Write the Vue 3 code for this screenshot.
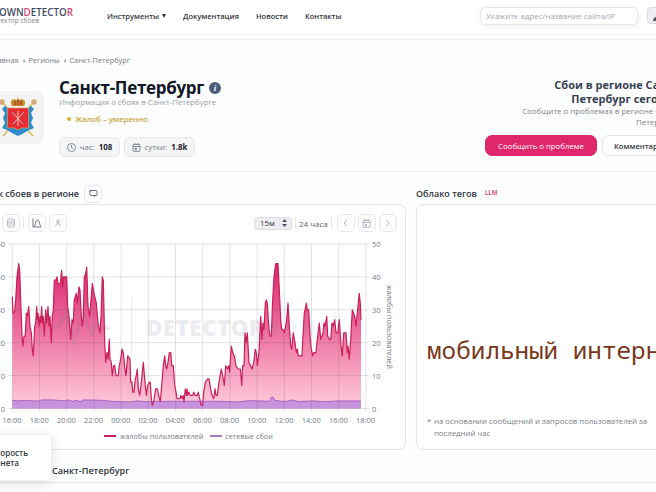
<script setup>
const menu = ['Документация', 'Новости', 'Контакты']
const hours = ['16:00', '18:00', '20:00', '22:00', '00:00', '02:00', '04:00', '06:00', '08:00', '10:00', '12:00', '14:00', '16:00', '18:00']
const levels = [50, 40, 30, 20, 10, 0]

// [position on the time axis, number of complaints]
const complaints = [
  [1, 34], [3, 29], [8, 29.5], [11, 33], [15, 40], [20, 44], [23, 42], [27, 30], [30, 22], [33, 19], [36, 22], [40, 22],
  [43, 29], [46, 28], [50, 31], [54, 25], [58, 23], [61, 18], [64, 16], [68, 25], [71, 26], [74, 31], [76, 27], [78, 29],
  [81, 25], [84, 28], [86, 26], [89, 31], [91, 26], [94, 28], [97, 22], [101, 30], [104, 26], [108, 31], [111, 25], [114, 28],
  [118, 20], [121, 28], [124, 30], [127, 39], [132, 39], [135, 40], [138, 38], [145, 38], [149, 42], [152, 37], [155, 40],
  [164, 40], [167, 31], [171, 28], [176, 21], [180, 27], [184, 26], [187, 33], [193, 35], [196, 32], [201, 37], [204, 36],
  [208, 28], [211, 25], [214, 28], [217, 40], [221, 41], [224, 43], [228, 31], [233, 28], [237, 33], [241, 38], [246, 35],
  [253, 32], [258, 26], [264, 23], [267, 28], [271, 40], [274, 39], [278, 20], [281, 14], [285, 17], [288, 15], [292, 21],
  [294, 15], [298, 14], [301, 10], [305, 13], [308, 13], [312, 10], [319, 10], [322, 13], [326, 15], [330, 18], [334, 17],
  [339, 12], [342, 10], [347, 16], [354, 15], [356, 8], [360, 8], [362, 5], [366, 5], [370, 9], [373, 10], [376, 12],
  [379, 6], [383, 4], [387, 7], [391, 11], [394, 14], [399, 8], [403, 4], [407, 7], [412, 8], [415, 8], [418, 3], [421, 1],
  [425, 2], [431, 6], [436, 6], [440, 4], [445, 2], [450, 8], [454, 13], [458, 16], [461, 13], [464, 12], [468, 14],
  [472, 17], [476, 17], [479, 13], [484, 13], [488, 7], [492, 5], [495, 3], [504, 3], [506, 4], [511, 3], [514, 4],
  [516, 2], [520, 6], [523, 4], [525, 6], [527, 4], [530, 5], [535, 4], [542, 4], [545, 5], [549, 4], [556, 4], [559, 5],
  [563, 3], [567, 1], [572, 1], [575, 5], [580, 8], [587, 9], [591, 9], [596, 6], [600, 4], [605, 3], [609, 6], [612, 4],
  [616, 4], [621, 8], [628, 12], [632, 10], [637, 7], [641, 13], [647, 12], [650, 13], [653, 11], [658, 19], [662, 17],
  [667, 16], [672, 13], [678, 12], [685, 12], [689, 7], [692, 13], [696, 13], [699, 23], [702, 20], [706, 23], [711, 14],
  [720, 12], [725, 14], [730, 18], [733, 17], [736, 13], [741, 17], [746, 28], [750, 21], [753, 26], [756, 24], [760, 32],
  [763, 33], [766, 32], [771, 24], [774, 22], [778, 22], [782, 33], [786, 40], [791, 44], [798, 44], [801, 38], [806, 27],
  [809, 24], [813, 24], [817, 23], [821, 25], [824, 27], [828, 32], [832, 25], [836, 19], [839, 18], [844, 23], [849, 20],
  [853, 17], [856, 18], [859, 16], [870, 16], [873, 22], [877, 29], [881, 31], [883, 32], [886, 30], [890, 30], [894, 22],
  [898, 18], [902, 16], [905, 17], [912, 17], [916, 21], [922, 26], [926, 21], [933, 23], [936, 26], [939, 25], [944, 28],
  [947, 22], [952, 21], [956, 21], [960, 26], [963, 25], [968, 27], [972, 23], [977, 23], [982, 27], [987, 19], [991, 16],
  [995, 23], [1002, 23], [1006, 17], [1008, 19], [1012, 15], [1016, 21], [1021, 30], [1028, 28], [1032, 25], [1036, 29],
  [1042, 35], [1045, 32], [1047, 27]
]
const network = [
  [1, 2.5], [20, 2.3], [40, 2.5], [60, 2.3], [80, 2.3], [90, 2.6], [120, 2.6], [160, 2.3], [169, 2.6], [182, 2.2],
  [190, 2.5], [205, 2.1], [215, 2.6], [270, 2.5], [300, 2.2], [350, 2], [375, 2.3], [400, 2.1], [480, 2.2], [620, 2.2],
  [680, 2], [710, 2.4], [773, 2.2], [777, 3.3], [784, 3.4], [788, 2.5], [810, 2.2], [825, 2.2], [840, 2.6], [860, 2.1],
  [900, 2.3], [940, 2.1], [980, 2.3], [1047, 2.3]
]

const toLine = (points) => 'M' + points.map(([x, v]) => `${(x / 3).toFixed(1)} ${(164.5 - v * 3.29).toFixed(1)}`).join('L')
const toArea = (points) => `${toLine(points)}V164.5H0.3Z`
</script>

<template>
  <div class="page">
    <header class="header">
      <div class="logo">
        <div class="logo-name"><i>D</i>OWN<i>D</i>ETECTO<i>R</i></div>
        <div class="logo-sub">Детектор сбоев</div>
      </div>
      <nav class="menu">
        <a class="tools">Инструменты<span class="caret"></span></a>
        <a v-for="item in menu" :key="item">{{ item }}</a>
      </nav>
      <div class="search">Укажите адрес/название сайта/IP</div>
      <div class="user">
        <svg width="14" height="12" viewBox="0 0 14 12" fill="#4b5563"><circle cx="7" cy="3" r="2.8" /><path d="M1 11c0-3 2.5-4.5 6-4.5s6 1.500 6 4.500z" /></svg>
      </div>
    </header>
    <div class="header-gap"></div>

    <div class="crumbs">
      <span>Главная</span><b>›</b><span>Регионы</span><b>›</b><span>Санкт-Петербург</span>
    </div>

    <section class="hero">
      <div class="emblem">
        <svg width="40" height="44" viewBox="0 0 40 44">
          <path d="M4 6l31 34M36 6L5 40" stroke="#d9bd61" stroke-width="1.5" />
          <circle cx="4" cy="6" r="2.7" fill="#d9a877" /><circle cx="36" cy="6" r="2.7" fill="#d9a877" />
          <path d="M7 10l-3 3 3 4-2 5 2 5-3 5 5 2 5 3 6 3 6-3 5-3 5-2-3-5 2-5-2-5 3-4-3-3-4 3H11z" fill="#2d8dcb" />
          <path d="M9.500 12h21v20h-7l-3.500 2-3.500-2h-7z" fill="#e62b32" stroke="#cda94f" stroke-width=".7" />
          <path d="M14 16l11 12M26 16L15 28M20 15v15" stroke="#f3c9bd" stroke-width="1" />
          <path d="M14 10c-3-5 1-8 5-6l1-3 1 3c4-2 8 1 5 6z" fill="#c58a2c" /><path d="M17 9V5M20 9V4M23 9V5" stroke="#a33c25" stroke-width="1.3" />
        </svg>
      </div>
      <div class="hero-info">
        <div class="title-row"><h1>Санкт-Петербург</h1><span class="info">i</span></div>
        <p class="subtitle">Информация о сбоях в Санкт-Петербурге</p>
        <p class="status"><span class="dot"></span>Жалоб – умеренно</p>
        <div class="chips">
          <div class="chip hour">
            <svg width="9" height="9" viewBox="0 0 9 9" fill="none" stroke="#6b7280" stroke-width=".8"><circle cx="4.5" cy="4.5" r="4" /><path d="M4.500 2v2.700l1.700 1" /></svg>
            <span>час:</span><b>108</b>
          </div>
          <div class="chip day">
            <svg width="9" height="9" viewBox="0 0 9 9" fill="none" stroke="#6b7280" stroke-width=".8"><rect x="1" y="1.4" width="7" height="7" rx="1" /><path d="M1 3.500h7M2.800 0v2M6.200 0v2M3 5.300h1.500v1.500H3z" /></svg>
            <span>сутки:</span><b>1.8k</b>
          </div>
        </div>
      </div>
      <div class="report">
        <h2>Сбои в регионе Санкт-<br><span class="shift">Петербург сегодня</span></h2>
        <p>Сообщите о проблемах в регионе Санкт-<br><span class="shift">Петербург</span></p>
        <div class="actions">
          <button class="btn primary">Сообщить о проблеме</button>
          <button class="btn plain">Комментарии</button>
        </div>
      </div>
    </section>

    <section class="content">
      <div class="chart-col">
        <div class="col-head">
          <h3 class="chart-title">График сбоев в регионе</h3>
          <span class="icon-btn">
            <svg width="9" height="9" viewBox="0 0 9 9" fill="none" stroke="#4b5563" stroke-width=".8"><rect x="1" y="1.5" width="7" height="5" rx=".6" /><path d="M5 8l1.500-1.500M1 3V1.500h2" /></svg>
          </span>
        </div>
        <div class="card chart-card">
          <div class="toolbar">
            <span class="icon-btn">
              <svg width="10" height="10" viewBox="0 0 10 10" fill="none" stroke="#9ca3af" stroke-width=".7"><ellipse cx="5" cy="2" rx="3.5" ry="1.3" /><path d="M1.500 2v6c0 1.600 7 1.600 7 0V2M1.500 4c0 1.500 7 1.500 7 0M1.500 6c0 1.500 7 1.500 7 0" /></svg>
            </span>
            <i class="sep tool-sep"></i>
            <span class="icon-btn">
              <svg width="10" height="10" viewBox="0 0 10 10" fill="none" stroke="#4b5563" stroke-width=".8"><path d="M1 .5V9h8.500M2 8.500c1.500 0 1-6.500 3.500-6.500s2 6.500 3.500 6.500" /></svg>
            </span>
            <span class="icon-btn last-tool">
              <svg width="8" height="8" viewBox="0 0 8 8" fill="none" stroke="#9ca3af" stroke-width=".8"><circle cx="4" cy="2.5" r="1.4" /><path d="M1.300 7.200L3.300 4.600h1.400l2 2.600" /></svg>
            </span>
            <div class="select">15м<svg width="5" height="8" viewBox="0 0 5 8" fill="#4b5563"><path d="M2.500 0L5 3H0zM2.500 8L0 5h5z" /></svg></div>
            <i class="sep"></i>
            <span class="range">24 часа</span>
            <i class="sep"></i>
            <span class="icon-btn nav"><svg width="5" height="8" viewBox="0 0 5 8" fill="none" stroke="#b3b7be"><path d="M4 .8L1 4l3 3.200" /></svg></span>
            <span class="icon-btn nav"><svg width="9" height="9" viewBox="0 0 9 9" fill="none" stroke="#9ca3af" stroke-width=".8"><rect x="1" y="1.4" width="7" height="7" rx="1" /><path d="M1 3.500h7M2.800 0v2M6.200 0v2M3 5.300h1.500v1.500H3z" /></svg></span>
            <span class="icon-btn nav"><svg width="5" height="8" viewBox="0 0 5 8" fill="none" stroke="#b3b7be"><path d="M1 .8L4 4 1 7.200" /></svg></span>
          </div>
          <svg class="chart" width="405" height="190" viewBox="0 -9 405 190">
            <defs>
              <linearGradient id="pink" x1="0" y1="19" x2="0" y2="164" gradientUnits="userSpaceOnUse">
                <stop offset="0" stop-color="#db246d" /><stop offset=".45" stop-color="#ec6d9d" /><stop offset="1" stop-color="#ffccdc" />
              </linearGradient>
            </defs>
            <g transform="translate(12 0)">
              <path :d="toArea(complaints)" fill="url(#pink)" />
              <path :d="toArea(network)" fill="#c893dd" />
              <g class="grid">
                <path v-for="v in levels" :key="v" :d="`M-4 ${164.5 - v * 3.29}H357`" />
                <path v-for="(h, i) in hours" :key="i" :d="`M${i * 27.2 + 0.3} 0V168`" />
              </g>
              <g class="watermark">
                <path d="M38 83h8l8-13 8 26 9-26 8 20 7-9 4 3h8" fill="none" stroke="#69758e" stroke-width="4" />
                <path d="M119.500 53V110" stroke="#69758e" />
                <text x="134" y="92" textLength="118">DETECTOR</text>
                <text x="255" y="92" textLength="48" class="wm-tail">404</text>
              </g>
              <path :d="toLine(complaints)" class="line pink" />
              <path :d="toLine(network)" class="line violet" />
            </g>
            <text v-for="v in levels" :key="'l' + v" class="axis" x="5" :y="167.5 - v * 3.29" text-anchor="end">{{ v }}</text>
            <text v-for="v in levels" :key="'r' + v" class="axis" x="372" :y="167.5 - v * 3.29">{{ v }}</text>
            <text v-for="(h, i) in hours" :key="'h' + i" class="axis" :x="12 + i * 27.2" y="179" text-anchor="middle" textLength="19">{{ h }}</text>
            <text class="axis" transform="translate(386.5 41) rotate(90)" textLength="84">жалобы пользователей</text>
          </svg>
          <div class="legend">
            <span class="key"></span><span>жалобы пользователей</span>
            <span class="key violet-key"></span><span>сетевые сбои</span>
          </div>
        </div>
      </div>

      <div class="tags-col">
        <div class="col-head"><h3>Облако тегов</h3><sup>LLM</sup></div>
        <div class="card tags-card">
          <div class="tag">мобильный интернет</div>
          <div class="note"><span>*</span><p>на основании сообщений и запросов пользователей за<br>последний час</p></div>
        </div>
      </div>
    </section>

    <footer class="next"><h3>Санкт-Петербург</h3></footer>

    <div class="toast"><span>Скорость</span><br><span class="toast-second">интернета</span></div>
  </div>
</template>

<style>
body {
  margin: 0;
  background: #fff;
}
</style>

<style scoped>
.page {
  position: relative;
  width: 656px;
  height: 492px;
  overflow: hidden;
  background: #fdfefe;
  color: #30343c;
  font-family: "Open Sans", "Noto Sans", sans-serif;
  font-size: 8px;
  white-space: nowrap;
}

h1, h2, h3, p {
  margin: 0;
}

.header {
  display: flex;
  align-items: flex-start;
  box-sizing: border-box;
  height: 35px;
  background: #fff;
  border-bottom: 1px solid #f1f2f3;
}

.header-gap {
  height: 4px;
  background: #fff;
  border-bottom: 1px solid #f1f2f3;
}

.logo {
  display: flex;
  flex-direction: column;
  align-items: flex-end;
  flex-shrink: 0;
  width: 73px;
  padding-top: 6px;
}

.logo-name {
  font-size: 9.8px;
  font-weight: 600;
  line-height: 13px;
  color: #3e4a60;
}

.logo-name i {
  font-style: normal;
  color: #d53f78;
}

.logo-sub {
  margin: -3px 34px 0 0;
  font-size: 6.6px;
  line-height: 9px;
  color: #858990;
}

.menu {
  display: flex;
  flex-shrink: 0;
  gap: 17px;
  box-sizing: border-box;
  width: 407px;
  padding-left: 34px;
  font-size: 7.5px;
  font-weight: 600;
  line-height: 32px;
}

.tools {
  display: flex;
  align-items: center;
}

.caret {
  margin-left: 3px;
  border: 2px solid transparent;
  border-top: 4px solid #30343c;
  border-bottom: 0;
}

.search {
  box-sizing: border-box;
  flex-shrink: 0;
  width: 158px;
  height: 18px;
  margin-top: 7px;
  padding-left: 5px;
  border: 1px solid #e4e6ea;
  border-radius: 5px;
  background: #fff;
  box-shadow: 0 2px 7px #eef0f2;
  font-size: 7.9px;
  line-height: 16px;
  color: #a1a6ae;
}

.user {
  box-sizing: border-box;
  flex-shrink: 0;
  width: 24px;
  height: 17px;
  margin: 7px 0 0 9px;
  padding: 2px 4px;
  border: 1px solid #d9dbe0;
  border-radius: 4px;
  background: #eeeff2;
}

.crumbs {
  display: flex;
  justify-content: flex-end;
  width: 130px;
  padding-top: 14px;
  font-size: 7.4px;
  line-height: 12px;
  color: #777b82;
}

.crumbs b {
  margin: 0 3px 0 4px;
}

.hero {
  display: flex;
  height: 105px;
  border-bottom: 1px solid #eef0f0;
}

.emblem {
  display: flex;
  align-items: center;
  justify-content: center;
  flex-shrink: 0;
  width: 52px;
  height: 53px;
  margin: 25px 0 0 -8px;
  border-radius: 6px;
  background: #f3f3f4;
}

.hero-info {
  flex-shrink: 0;
  width: 220px;
  padding: 12px 0 0 15px;
}

.title-row {
  display: flex;
  align-items: center;
  height: 19px;
}

h1 {
  font-size: 17px;
  line-height: 19px;
  letter-spacing: -.32px;
  color: #111827;
}

.info {
  width: 12px;
  height: 12px;
  margin-left: 5px;
  border-radius: 50%;
  background: #4b5d7b;
  color: #fff;
  font: italic bold 9px/12px "Liberation Serif", serif;
  text-align: center;
}

.subtitle {
  height: 11px;
  font-size: 7.8px;
  line-height: 11px;
  color: #989da6;
}

.status {
  display: flex;
  align-items: center;
  height: 14px;
  margin: 4px 0 0 8px;
  font-size: 7.8px;
  font-weight: 600;
  color: #c6a53c;
}

.dot {
  width: 4px;
  height: 4px;
  margin-right: 4px;
  border-radius: 50%;
  background: #dfae2c;
}

.chips {
  display: flex;
  gap: 4px;
  margin-top: 11px;
}

.chip {
  display: flex;
  align-items: center;
  justify-content: center;
  box-sizing: border-box;
  height: 20px;
  border: 1px solid #e5e7eb;
  border-radius: 5px;
  background: #f4f5f6;
  font-size: 7.9px;
  color: #747982;
}

.chip span {
  margin: 0 4px;
}

.chip b {
  color: #1f2633;
}

.hour {
  width: 61px;
}

.day {
  width: 71px;
}

.report {
  flex-shrink: 0;
  width: 400px;
  margin-left: 206px;
  padding-top: 12px;
  color: #7d828b;
}

.report h2 {
  width: 198px;
  font-size: 11px;
  line-height: 14px;
  text-align: right;
  color: #364052;
}

.report p {
  width: 195px;
  font-size: 7.9px;
  line-height: 11px;
  text-align: right;
}

.shift {
  margin-right: 4px;
}

.actions {
  display: flex;
  gap: 5px;
  margin-top: 7px;
}

.content {
  display: flex;
  height: 277px;
}

.col-head {
  display: flex;
  align-items: center;
  height: 32px;
  padding-top: 11px;
  box-sizing: border-box;
}

h3 {
  font-size: 9px;
  font-weight: 600;
  line-height: 12px;
}

.chart-col {
  flex-shrink: 0;
  width: 416px;
}

.chart-title {
  display: flex;
  justify-content: flex-end;
  width: 79px;
}

.icon-btn {
  display: flex;
  align-items: center;
  justify-content: center;
  box-sizing: border-box;
  flex-shrink: 0;
  width: 18px;
  height: 18px;
  border: 1px solid #e5e7eb;
  border-radius: 5px;
  background: #fff;
}

.col-head .icon-btn {
  margin-left: 5px;
}

.card {
  box-sizing: border-box;
  height: 246px;
  border: 1px solid #e2e7e8;
  background: #fff;
}

.chart-card {
  width: 406px;
  border-left: 0;
  border-radius: 0 7px 7px 0;
}

.toolbar {
  display: flex;
  align-items: center;
  height: 18px;
  padding: 9px 0 3px 2px;
}

.sep {
  width: 1px;
  height: 12px;
  margin: 0 3px;
  background: #e5e7eb;
}

.tool-sep {
  margin-right: 4px;
}

.last-tool {
  margin-left: 3px;
}

.select {
  display: flex;
  align-items: center;
  justify-content: space-between;
  box-sizing: border-box;
  width: 38px;
  height: 13px;
  margin-left: 187px;
  padding: 0 4px 0 5px;
  border: 1px solid #dcdde1;
  border-radius: 3px;
  background: #eeeef0;
  font-size: 7.8px;
}

.range {
  color: #5d626b;
}

.nav {
  margin-left: 2px;
}

.nav + .nav {
  margin-left: 3px;
}

.chart {
  display: block;
}

.grid path {
  stroke: #444450;
  stroke-opacity: .2;
  stroke-width: .8;
}

.line {
  fill: none;
  stroke-linejoin: round;
  stroke-width: 1.2;
}

.line.pink {
  stroke: #c82059;
}

.line.violet {
  stroke: #9951b9;
  stroke-width: .8;
}

.watermark {
  opacity: .13;
}

.watermark text {
  font-size: 22px;
  font-weight: 800;
  fill: #69758e;
}

.watermark .wm-tail {
  opacity: .6;
}

.axis {
  font-size: 7.5px;
  fill: #73777f;
}

.legend {
  display: flex;
  align-items: center;
  height: 14px;
  margin-top: 4px;
  padding-left: 104px;
  font-size: 7.25px;
  color: #777b84;
}

.key {
  width: 12px;
  height: 1.5px;
  margin-right: 4px;
  background: #c82059;
}

.violet-key {
  margin-left: 7px;
  margin-right: 3px;
  background: #9c7bc2;
}

.tags-col {
  flex-shrink: 0;
  width: 300px;
}

sup {
  margin: -2px 0 0 8px;
  font-size: 6.2px;
  font-weight: 600;
  line-height: 8px;
  color: #d52d62;
}

.tags-card {
  padding: 129px 0 0 10px;
  border-radius: 7px;
}

.tag {
  height: 82px;
  font-family: "Noto Sans Mono", "DejaVu Sans Mono", monospace;
  font-size: 24.3px;
  line-height: 32px;
  color: #783719;
}

.note {
  display: flex;
  font-size: 7.8px;
  line-height: 11.5px;
  color: #7a7d85;
}

.note span {
  width: 7px;
}

.next {
  display: flex;
  align-items: center;
  box-sizing: border-box;
  height: 34px;
  padding: 10px 0 0 52px;
  border-bottom: 1px solid #e6e9ea;
}

.next h3 {
  font-size: 9.1px;
}

.toast {
  position: absolute;
  left: -100px;
  top: 434px;
  box-sizing: border-box;
  width: 152px;
  height: 47px;
  padding: 13px 23px 0 0;
  border: 1px solid #eceeef;
  border-radius: 6px;
  background: #fff;
  box-shadow: 0 2px 12px rgba(0, 0, 0, .13);
  font-size: 8px;
  font-weight: 600;
  line-height: 10px;
  text-align: right;
}

.toast-second {
  margin-right: 9px;
}

.btn {
  box-sizing: border-box;
  flex-shrink: 0;
  height: 21px;
  padding: 0;
  border: 1px solid #e2e4e8;
  border-radius: 7px;
  background: #fff;
  color: #30343c;
  font-family: inherit;
  font-size: 7.6px;
  font-weight: 600;
}

.primary {
  width: 112px;
  border-color: #df286b;
  background: #df286b;
  color: #fff;
  font-size: 7.8px;
  font-weight: 500;
}

.plain {
  width: 78px;
}
</style>
